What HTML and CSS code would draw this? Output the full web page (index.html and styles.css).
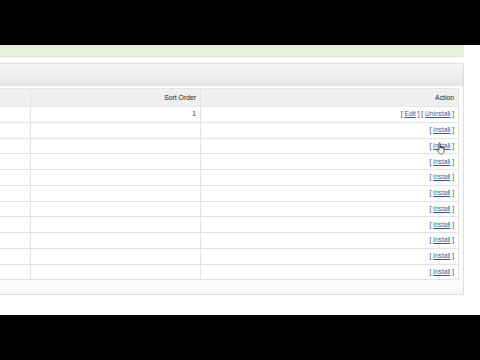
FILE: index.html
```html
<!DOCTYPE html>
<html>
<head>
<meta charset="utf-8">
<link rel="stylesheet" href="styles.css">
</head>
<body>
<div class="bar-top"></div>
<main class="content">
  <div class="success"></div>
  <section class="box">
    <div class="box-heading"></div>
    <div class="box-body">
      <table class="list">
        <thead>
          <tr><td class="c1"></td><td class="c2">Sort Order</td><td class="c3">Action</td></tr>
        </thead>
        <tbody>
          <tr><td></td><td class="c2">1</td><td class="c3">[ <a href="#">Edit</a> ] [ <a href="#">Uninstall</a> ]</td></tr>
          <tr><td></td><td></td><td class="c3">[ <a href="#">Install</a> ]</td></tr>
          <tr><td></td><td></td><td class="c3">[ <a href="#">Install</a> ]</td></tr>
          <tr><td></td><td></td><td class="c3">[ <a href="#">Install</a> ]</td></tr>
          <tr><td></td><td></td><td class="c3">[ <a href="#">Install</a> ]</td></tr>
          <tr><td></td><td></td><td class="c3">[ <a href="#">Install</a> ]</td></tr>
          <tr><td></td><td></td><td class="c3">[ <a href="#">Install</a> ]</td></tr>
          <tr><td></td><td></td><td class="c3">[ <a href="#">Install</a> ]</td></tr>
          <tr><td></td><td></td><td class="c3">[ <a href="#">Install</a> ]</td></tr>
          <tr><td></td><td></td><td class="c3">[ <a href="#">Install</a> ]</td></tr>
          <tr><td></td><td></td><td class="c3">[ <a href="#">Install</a> ]</td></tr>
        </tbody>
      </table>
    </div>
  </section>
  <svg class="cursor" width="10" height="13" viewBox="0 0 10 13">
    <path d="M3 1.2c0-.7 1.2-.7 1.2 0V6l.1-1.3c0-.7 1.2-.7 1.2 0V6.2l.1-1c0-.7 1.2-.7 1.2 0v1.3l.1-.7c0-.7 1.1-.7 1.1 0V9c0 1.6-1 3-2.6 3H5C3.8 12 3.2 11.3 2.6 10.4L.9 7.6c-.4-.6.3-1.2.8-.7L3 8.3z" fill="#fff" stroke="#222" stroke-width=".7"/>
  </svg>
</main>
<div class="bar-bottom"></div>
</body>
</html>
```
FILE: styles.css
```css
html, body {
  margin: 0;
  padding: 0;
  background: #fff;
}
body {
  width: 480px;
  height: 360px;
  display: flex;
  flex-direction: column;
  overflow: hidden;
  font-family: "Liberation Sans", Arial, sans-serif;
}
.bar-top {
  height: 45px;
  background: #000;
  flex: none;
}
.bar-bottom {
  height: 45px;
  background: #000;
  flex: none;
}
.content {
  flex: 1;
  position: relative;
  width: 464px;
  display: flex;
  flex-direction: column;
  gap: 6px;
}
.success {
  height: 11px;
  background: #e4f2d9;
  border-bottom: 1px solid #d9ecc9;
}
.box {
  border: 1px solid #dedede;
  border-left: none;
  background: #fff;
}
.box-heading {
  height: 21px;
  background: linear-gradient(#f5f5f5, #e8e8e8);
  border-bottom: 1px solid #e0e0e0;
}
.box-body {
  padding: 2px 4px 14px 0;
  background: linear-gradient(#fff 0, #fff 192px, #fafafa 192px);
}
.list {
  width: 100%;
  border-collapse: collapse;
  font-size: 6.6px;
  color: #333;
}
.list td {
  border: 1px solid #e3e3e3;
  padding: 0 4px;
  height: 14.75px;
  line-height: 14px;
  background: #fff;
}
.list thead td {
  height: 17px;
  background: #efefef;
  color: #222;
  font-size: 6.8px;
  border-color: #e6e6e6;
}
.list td:first-child {
  border-left: none;
}
.c1 { width: 22px; }
.c2 { width: 161px; text-align: right; }
.c3 { text-align: right; }
.list a {
  color: #3b5b94;
  text-decoration: underline;
}
.cursor {
  position: absolute;
  left: 436px;
  top: 97px;
}
```
